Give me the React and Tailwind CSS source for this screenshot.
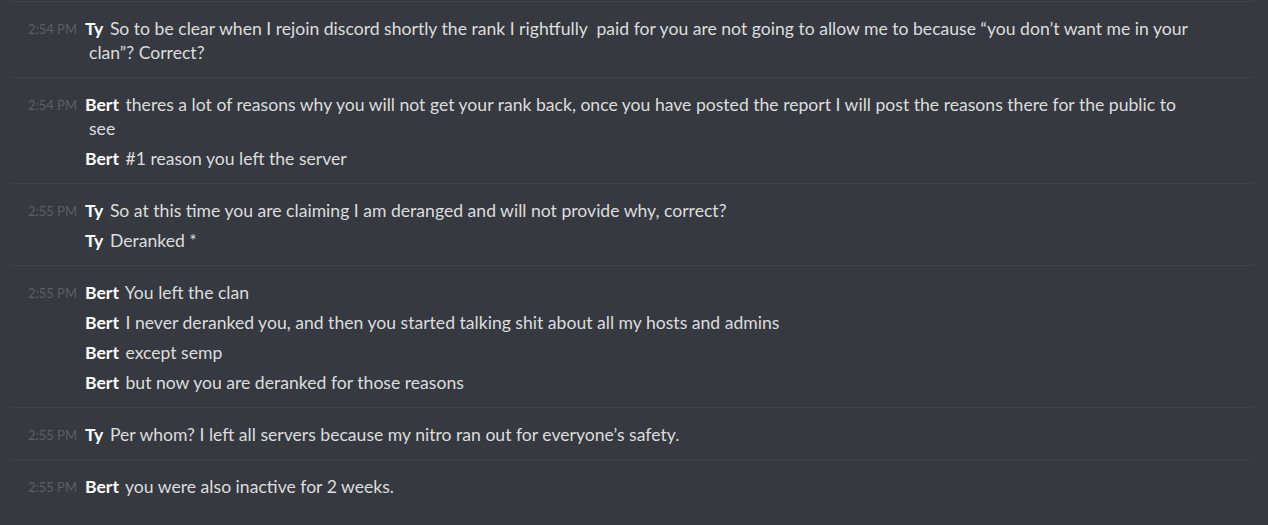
import React from "react";

const groups = [
  {
    time: "2:54 PM",
    msgs: [
      ["Ty", "So to be clear when I rejoin discord shortly the rank I rightfully\u00a0 paid for you are not going to allow me to because \u201cyou don\u2019t want me in your clan\u201d? Correct?"],
    ],
  },
  {
    time: "2:54 PM",
    msgs: [
      ["Bert", "theres a lot of reasons why you will not get your rank back, once you have posted the report I will post the reasons there for the public to see"],
      ["Bert", "#1 reason you left the server"],
    ],
  },
  {
    time: "2:55 PM",
    msgs: [
      ["Ty", "So at this time you are claiming I am deranged and will not provide why, correct?"],
      ["Ty", "Deranked *"],
    ],
  },
  {
    time: "2:55 PM",
    msgs: [
      ["Bert", "You left the clan"],
      ["Bert", "I never deranked you, and then you started talking shit about all my hosts and admins"],
      ["Bert", "except semp"],
      ["Bert", "but now you are deranked for those reasons"],
    ],
  },
  {
    time: "2:55 PM",
    msgs: [["Ty", "Per whom? I left all servers because my nitro ran out for everyone\u2019s safety."]],
  },
  {
    time: "2:55 PM",
    msgs: [["Bert", "you were also inactive for 2 weeks."]],
  },
];

export default function App() {
  return (
    <div
      className="w-full h-[525px] bg-[#36393f] pt-px pl-[10px] pr-[15px] overflow-hidden"
      style={{ fontFamily: "Lato, 'Open Sans', sans-serif" }}
    >
      {groups.map((g, gi) => (
        <div key={gi} className="border-t border-[#3f4248] pt-[12px] pb-[9px]">
          {g.msgs.map(([user, text], mi) => (
            <div key={mi} className="flex py-[3px]">
              <div className="w-[71px] shrink-0 pr-[4px] text-right text-[13px] leading-[24px] text-[#5c5f65]">
                {mi === 0 ? g.time : ""}
              </div>
              <div className="flex-1 pl-[8px] pr-[50px] -indent-1 text-[17.6px] leading-[24px] text-[#dcddde]">
                <span className="font-bold text-white mr-[2px]">{user}</span>{" "}
                <span>{text}</span>
              </div>
            </div>
          ))}
        </div>
      ))}
    </div>
  );
}
